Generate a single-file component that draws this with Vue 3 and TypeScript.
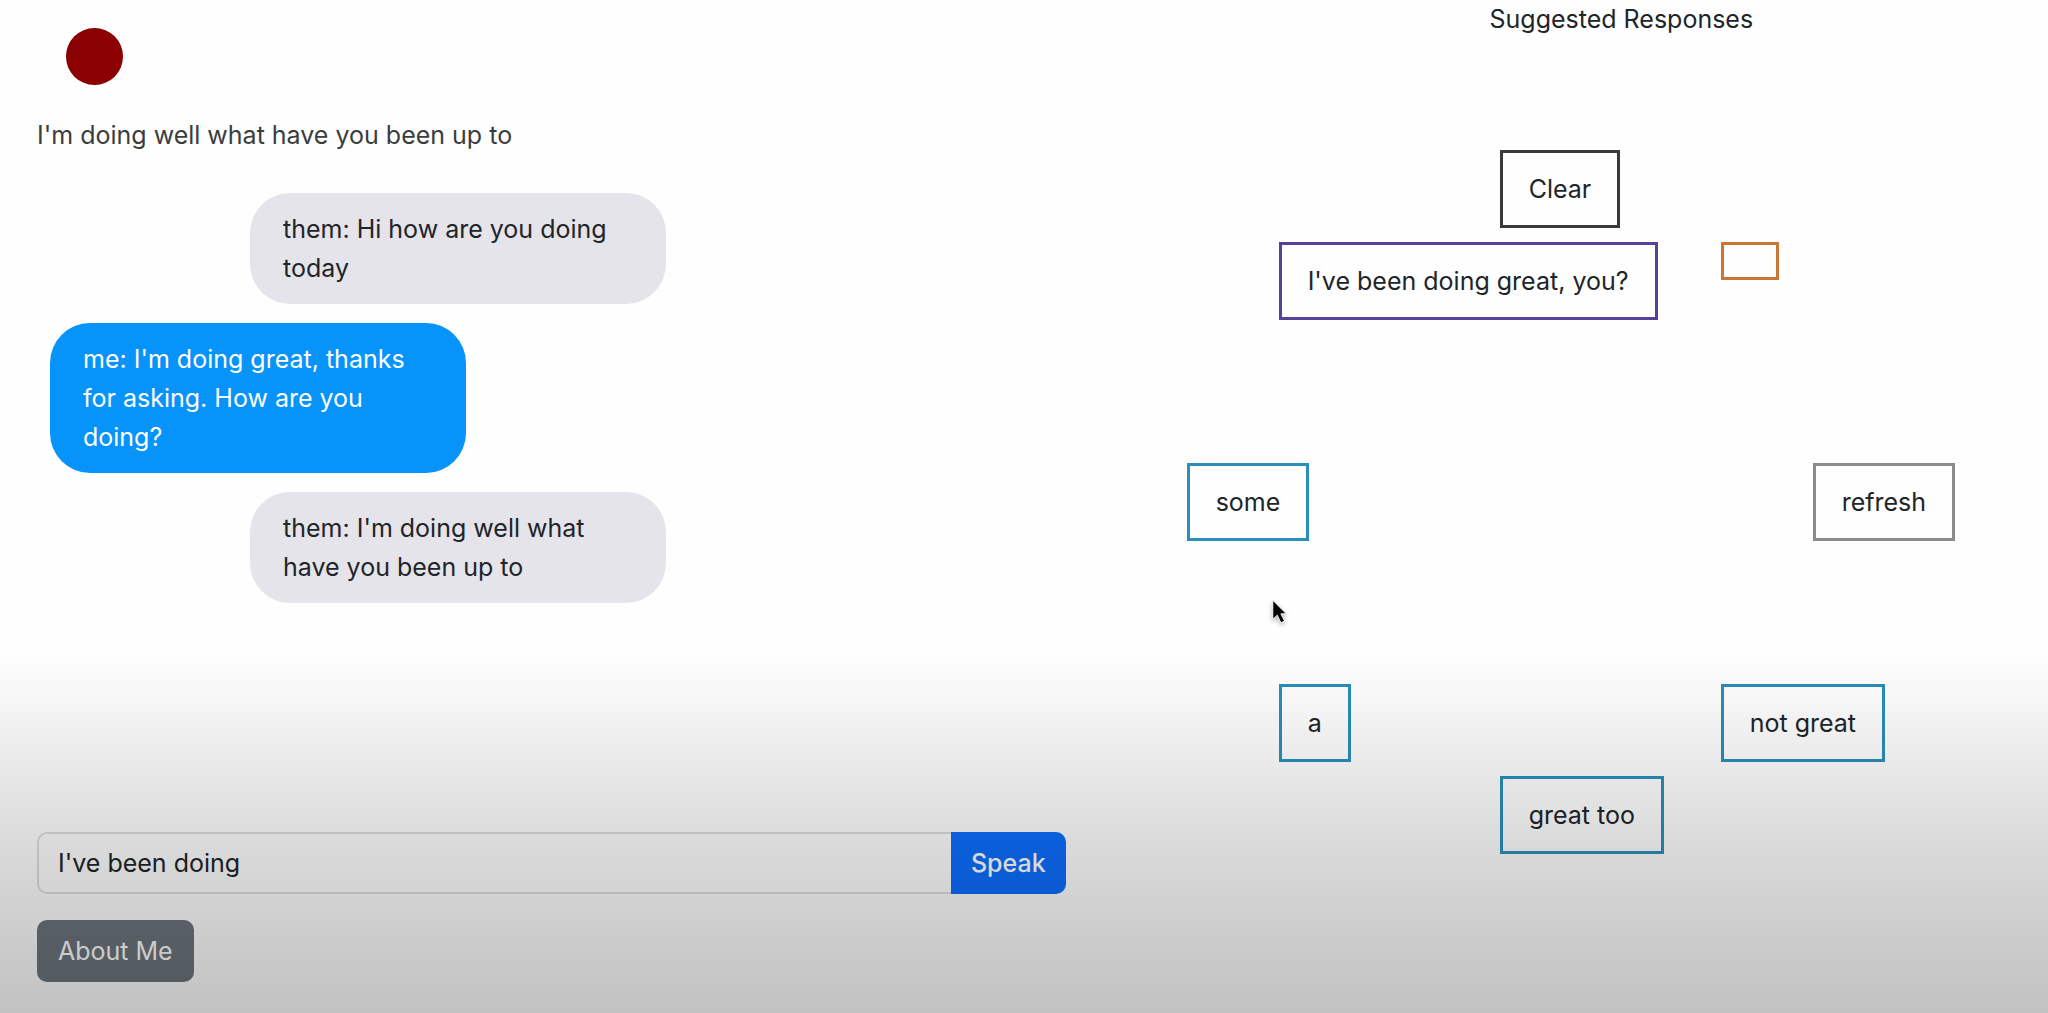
<script setup lang="ts">
import { ref } from 'vue'

interface Message {
  from: 'them' | 'me'
  text: string
}

interface Choice {
  label: string
  kind: 'word' | 'clear' | 'sentence' | 'empty' | 'refresh'
}

const heard = ref("I'm doing well what have you been up to")
const draft = ref("I've been doing")

const messages = ref<Message[]>([
  { from: 'them', text: 'Hi how are you doing today' },
  { from: 'me', text: "I'm doing great, thanks for asking. How are you doing?" },
  { from: 'them', text: "I'm doing well what have you been up to" },
])

// Clockwise around the ring, starting at the top.
const choices = ref<Choice[]>([
  { label: 'Clear', kind: 'clear' },
  { label: '', kind: 'empty' },
  { label: 'refresh', kind: 'refresh' },
  { label: 'not great', kind: 'word' },
  { label: 'great too', kind: 'word' },
  { label: 'a', kind: 'word' },
  { label: 'some', kind: 'word' },
  { label: "I've been doing great, you?", kind: 'sentence' },
])

const RADIUS = 313

function ringPosition(index: number) {
  const angle = (index / choices.value.length) * 2 * Math.PI
  const x = Math.round(RADIUS * Math.sin(angle))
  const y = Math.round(RADIUS * (1 - Math.cos(angle)))
  return { left: `${RADIUS + x}px`, top: `${y}px` }
}

function choose(choice: Choice) {
  if (choice.kind === 'clear') draft.value = ''
  else if (choice.kind === 'word') draft.value = `${draft.value} ${choice.label}`.trim()
  else if (choice.kind === 'sentence') draft.value = choice.label
}

function speak() {
  if (!draft.value) return
  messages.value.push({ from: 'me', text: draft.value })
  draft.value = ''
}
</script>

<template>
  <div class="page">
    <main class="conversation">
      <button class="record" type="button" aria-label="Record"></button>
      <p class="heard">{{ heard }}</p>
      <div class="messages">
        <p v-for="(m, i) in messages" :key="i" class="bubble" :class="m.from">{{ m.from }}: {{ m.text }}</p>
      </div>
      <form class="composer" @submit.prevent="speak">
        <input v-model="draft" class="draft" type="text" aria-label="Your response" />
        <button class="speak" type="submit">Speak</button>
      </form>
      <button class="about" type="button">About Me</button>
    </main>

    <section class="suggestions">
      <h2 class="title">Suggested Responses</h2>
      <div class="ring">
        <button
          v-for="(c, i) in choices"
          :key="i"
          class="choice"
          :class="c.kind"
          type="button"
          :aria-label="c.label || 'Empty suggestion'"
          :style="ringPosition(i)"
          @click="choose(c)"
        >{{ c.label }}</button>
        <svg class="pointer" viewBox="0 0 20 30" aria-hidden="true">
          <path d="M2 2V23L7 18.500L11 27L15 25L11 17H17Z" fill="#000" stroke="#fff" stroke-width="1" />
        </svg>
      </div>
    </section>

    <div class="shade"></div>
  </div>
</template>

<style>
body {
  margin: 0;
  background: #fefefe;
}
</style>

<style scoped>
.page {
  display: grid;
  grid-template-columns: 7fr 5fr;
  min-height: 100vh;
  color: #212529;
  font-family: Inter, "Liberation Sans", sans-serif;
  font-size: 25px;
  line-height: 39px;
}

.page *,
.page {
  box-sizing: border-box;
}

button,
input {
  font: inherit;
  color: inherit;
}

button {
  cursor: pointer;
}

.conversation {
  display: flex;
  flex-direction: column;
  align-items: flex-start;
  padding: 28px 129px 31px 37px;
}

.record {
  width: 57px;
  height: 57px;
  margin-left: 29px;
  padding: 0;
  border: 0;
  border-radius: 50%;
  background: #8b0000;
}

.heard {
  margin: 31px 0 38px;
  color: #3a3d40;
}

.messages {
  display: flex;
  flex-direction: column;
  gap: 19px;
  margin: 0 0 32px 13px;
}

.bubble {
  width: 416px;
  margin: 0;
  padding: 17px 33px 16px;
  border-radius: 40px;
}

.them {
  margin-left: 200px;
  background: #e5e4ea;
}

.me {
  background: #0693fa;
  color: #fff;
}

.composer {
  display: flex;
  align-self: stretch;
  margin-top: auto;
  margin-bottom: 26px;
}

.draft {
  flex: 1;
  min-width: 0;
  height: 62px;
  padding: 0 19px;
  border: 2px solid #dcdfe2;
  border-right: 0;
  border-radius: 10px 0 0 10px;
  background: transparent;
  outline: 0;
}

.speak,
.about {
  height: 62px;
  padding: 0 21px;
  border: 0;
  border-radius: 10px;
  color: #fff;
}

.speak {
  padding: 0 20px;
  border-radius: 0 10px 10px 0;
  background: #0d6efd;
  font-weight: 500;
}

.about {
  background: #6c757d;
}

.title {
  margin: 0 0 130px;
  font-size: 25px;
  font-weight: 400;
  line-height: 39px;
  text-align: center;
}

/* Choices hang from their top left corner on a circle. */
.ring {
  position: relative;
  height: 704px;
  margin: -19px 0 0 -8px;
}

.choice {
  position: absolute;
  padding: 16px 26px;
  border: 3px solid #2b8fba;
  border-radius: 0;
  background: transparent;
  line-height: 40px;
  white-space: nowrap;
}

.clear {
  border-color: #3a3a3a;
}

.sentence {
  border-color: #56429a;
}

.empty {
  border-color: #cb7635;
}

.refresh {
  border-color: #8c8c8c;
}

.pointer {
  position: absolute;
  left: 84px;
  top: 448px;
  width: 18px;
  height: 28px;
  filter: drop-shadow(0 2px 2px rgba(0, 0, 0, 0.3));
  pointer-events: none;
}

.shade {
  position: fixed;
  right: 0;
  bottom: 0;
  left: 0;
  height: 360px;
  background: linear-gradient(
    rgba(0, 0, 0, 0),
    rgba(0, 0, 0, 0.03) 13%,
    rgba(0, 0, 0, 0.07) 27%,
    rgba(0, 0, 0, 0.145) 55%,
    rgba(0, 0, 0, 0.205) 83%,
    rgba(0, 0, 0, 0.235)
  );
  pointer-events: none;
}
</style>
